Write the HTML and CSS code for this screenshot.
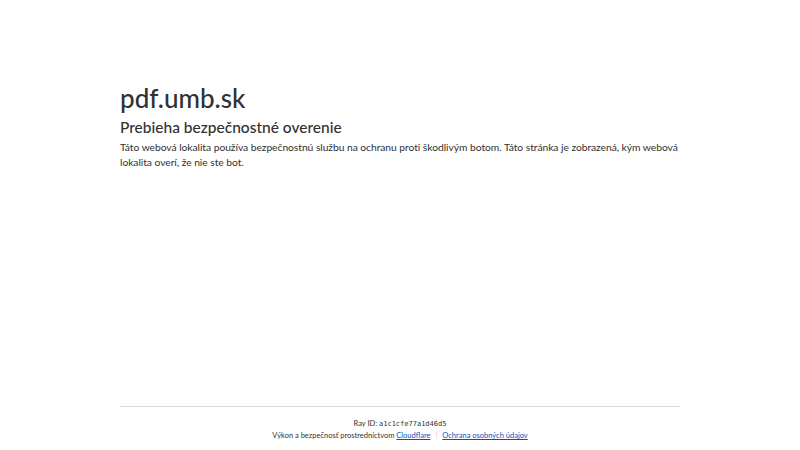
FILE: index.html
```html
<!DOCTYPE html>
<html lang="sk">
<head>
    <meta charset="UTF-8">
    <meta name="viewport" content="width=device-width, initial-scale=1.0">
    <title>Čakajte, prosím...</title>
    <link rel="stylesheet" href="styles.css">
</head>
<body>
    <div class="main-wrapper">
        <div class="main-content">
            <h1 class="h1 zone-name-title">pdf.umb.sk</h1>
            <h2 class="h2">Prebieha bezpečnostné overenie</h2>
            <p class="core-msg">Táto webová lokalita používa bezpečnostnú službu na ochranu proti škodlivým botom. Táto stránka je zobrazená, kým webová lokalita overí, že nie ste bot.</p>
        </div>
    </div>
    <footer class="footer">
        <div class="footer-inner">
            <div class="text-center ray-id">Ray ID: <code>a1c1cfe77a1d46d5</code></div>
            <div class="text-center">
                Výkon a bezpečnosť prostredníctvom <a href="#" class="footer-link">Cloudflare</a><span class="sep">|</span><a href="#" class="footer-link">Ochrana osobných údajov</a>
            </div>
        </div>
    </footer>
</body>
</html>
```

FILE: styles.css
```css
*{
    box-sizing: border-box;
    margin: 0;
    padding: 0;
}
html{
    line-height: 1.15;
}
body{
    display: flex;
    flex-direction: column;
    height: 100vh;
    min-height: 100vh;
    background-color: #ffffff;
    color: #313131;
    font-family: Lato, "Noto Sans", sans-serif;
}
.main-wrapper{
    flex: 1;
}
.main-content{
    width: 560px;
    margin: 80px auto 0;
}
.h1{
    font-size: 26px;
    font-weight: 500;
    line-height: 37px;
}
.h2{
    font-size: 15.5px;
    font-weight: 500;
    line-height: 21px;
}
.core-msg{
    margin-top: 2px;
    font-size: 10.3px;
    line-height: 15px;
    letter-spacing: -0.05px;
}
.footer{
    width: 560px;
    margin: 0 auto;
    font-size: 7.5px;
    line-height: 12px;
}
.footer-inner{
    border-top: 1px solid #d9d9d9;
    padding: 11px 0 8px;
}
.text-center{
    text-align: center;
}
.ray-id code{
    font-family: "DejaVu Sans Mono", monospace;
    font-size: 7px;
}
.footer-link{
    color: #0051c3;
}
.sep{
    color: #cccccc;
    padding: 0 5px;
}
```
